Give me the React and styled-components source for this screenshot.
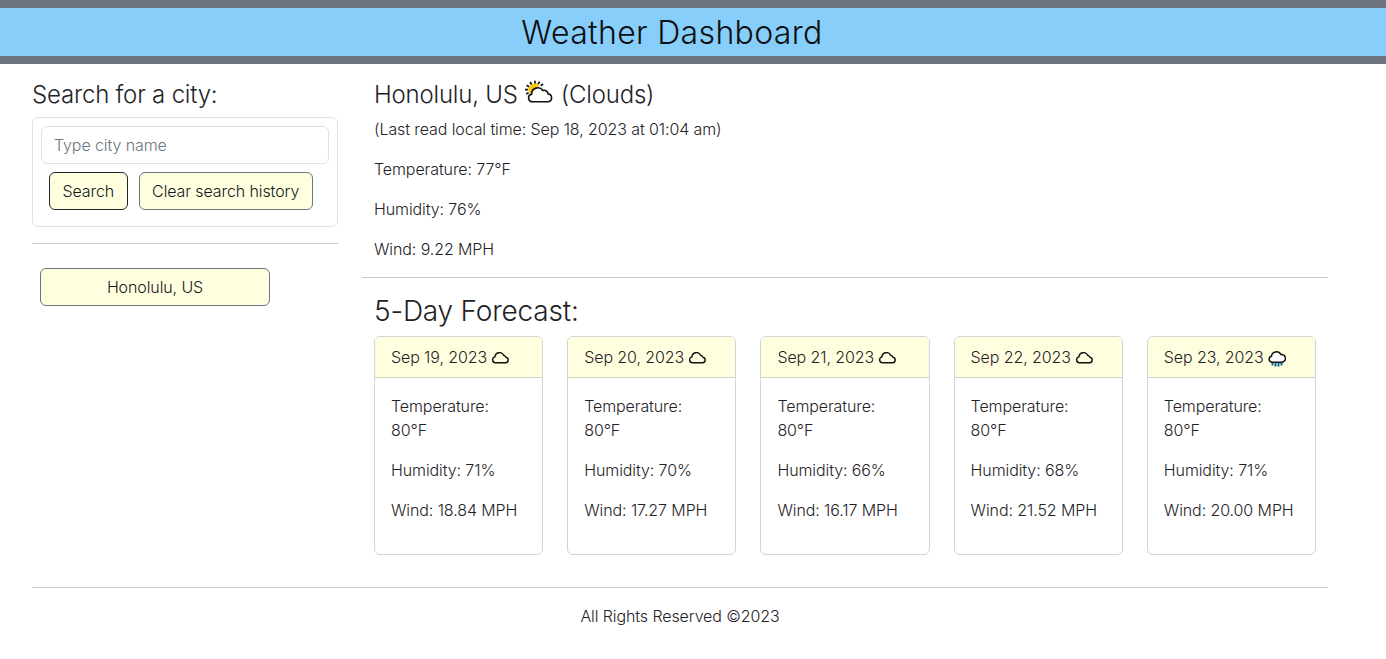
import React from 'react';
import styled, { createGlobalStyle } from 'styled-components';

const GlobalStyle = createGlobalStyle`
  html, body {
    margin: 0;
    padding: 0;
    background: #fff;
    color: #1f2327;
    font-family: 'Inter', 'Noto Sans', sans-serif;
    font-size: 16px;
    font-weight: 300;
    letter-spacing: -0.1px;
    line-height: 24px;
  }
  * { box-sizing: border-box; }
`;

const forecast = [
  { date: 'Sep 19, 2023', humidity: 71, wind: '18.84' },
  { date: 'Sep 20, 2023', humidity: 70, wind: '17.27' },
  { date: 'Sep 21, 2023', humidity: 66, wind: '16.17' },
  { date: 'Sep 22, 2023', humidity: 68, wind: '21.52' },
  { date: 'Sep 23, 2023', humidity: 71, wind: '20.00', rain: true },
];

const CloudIcon = () => (
  <IconSvg width="18" height="12" viewBox="0 0 18 12">
    <path d="M4.500 10.800a3 3 0 0 1-.6-5.900 4.600 4.600 0 0 1 8.700-1.700 3.400 3.400 0 0 1 2.400 2.100 2.800 2.800 0 0 1-.2 5.500z" fill="none" stroke="#111" strokeWidth="1.4" />
  </IconSvg>
);

const RainIcon = () => (
  <IconSvg $drop width="18" height="17" viewBox="0 0 18 17">
    <path d="M4.500 11.500v3M7.500 11.500v4M10.500 11.500v4M13.500 11.500v3" stroke="#0b6a94" strokeWidth="2" />
    <path d="M4 11.200a3 3 0 0 1-.6-5.900 5 5 0 0 1 9.400-1.800 3.800 3.800 0 0 1 1.500 7.700z" fill="#fff" stroke="#111" strokeWidth="1.5" />
  </IconSvg>
);

const SunCloudIcon = () => (
  <IconSvg $large width="30" height="24" viewBox="0 0 30 24">
    <path d="M4.200 10.500a6.800 6.800 0 0 1 6.800-7.200 6 6 0 0 1 5 2.400l-4 1.800-3.500 6-3-.5z" fill="#f9c80e" />
    <path d="M11 .8v2.800M6.200 2l1.300 2.500M2.600 5.200l2.500 1.500M1 9.600h2.900M2.200 14l2.400-1.200M15.600 1.700l-1.400 2.500M19 4l-2.200 1.900" stroke="#111" strokeWidth="1.700" />
    <path d="M8.500 21.800a3.900 3.900 0 0 1-.9-7.700 6.200 6.200 0 0 1 11.300-3.600 4 4 0 0 1 5.200 3.400 4 4 0 0 1 .2 7.900z" fill="#fff" stroke="#111" strokeWidth="1.600" />
  </IconSvg>
);

export default function App() {
  return (
    <>
      <GlobalStyle />
      <Header><HeaderTitle>Weather Dashboard</HeaderTitle></Header>
      <Page>
        <Columns>
          <Sidebar>
            <SearchTitle>Search for a city:</SearchTitle>
            <SearchCard>
              <CityInput placeholder="Type city name" />
              <ButtonRow>
                <ActionButton $dark>Search</ActionButton>
                <ActionButton>Clear search history</ActionButton>
              </ButtonRow>
            </SearchCard>
            <SideRule />
            <HistoryButton>Honolulu, US</HistoryButton>
          </Sidebar>
          <Main>
            <Current>
              <CityTitle>Honolulu, US <SunCloudIcon /> (Clouds)</CityTitle>
              <ReadTime>(Last read local time: Sep 18, 2023 at 01:04 am)</ReadTime>
              <Stat>Temperature: 77°F</Stat>
              <Stat>Humidity: 76%</Stat>
              <Stat>Wind: 9.22 MPH</Stat>
            </Current>
            <MainRule />
            <ForecastTitle>5-Day Forecast:</ForecastTitle>
            <CardRow>
              {forecast.map((day) => (
                <DayCard key={day.date}>
                  <DayHeader>{day.date} {day.rain ? <RainIcon /> : <CloudIcon />}</DayHeader>
                  <DayBody>
                    <DayStat>Temperature: 80°F</DayStat>
                    <DayStat>Humidity: {day.humidity}%</DayStat>
                    <DayStat>Wind: {day.wind} MPH</DayStat>
                  </DayBody>
                </DayCard>
              ))}
            </CardRow>
          </Main>
        </Columns>
        <Footer>All Rights Reserved ©2023</Footer>
      </Page>
    </>
  );
}

const IconSvg = styled.svg`
  display: inline-block;
  vertical-align: ${(p) => (p.$large ? '-1px' : p.$drop ? '-5px' : '-1px')};
`;

const Header = styled.header`
  height: 64px;
  background: #87cefa;
  border-top: 8px solid #6c757d;
  border-bottom: 8px solid #6c757d;
  padding: 2px 42px 0 0;
  text-align: center;
`;

const HeaderTitle = styled.h1`
  margin: 0;
  color: #0d0f11;
  font-size: 32px;
  font-weight: 300;
  letter-spacing: 0.35px;
  line-height: 46px;
`;

const Page = styled.div`
  padding: 0 58px 0 32px;
`;

const Columns = styled.div`
  display: grid;
  grid-template-columns: 306px 966px;
  gap: 24px;
`;

const Sidebar = styled.aside`
  padding-top: 16px;
`;

const SearchTitle = styled.h2`
  margin: 0 0 8px;
  font-size: 24px;
  font-weight: 300;
  letter-spacing: -0.2px;
  line-height: 29px;
`;

const SearchCard = styled.div`
  height: 110px;
  padding: 8px;
  border: 1px solid #dee2e6;
  border-radius: 6px;
`;

const CityInput = styled.input`
  display: block;
  width: 100%;
  height: 38px;
  padding: 6px 12px;
  border: 1px solid #dee2e6;
  border-radius: 6px;
  font: inherit;
  letter-spacing: inherit;
  color: #212529;
  &::placeholder { color: #6c757d; }
`;

const ButtonRow = styled.div`
  display: flex;
  gap: 11px;
  margin: 8px 0 0 8px;
`;

const ActionButton = styled.button`
  height: 38px;
  padding: 0 12.5px;
  background: lightyellow;
  border: 1px solid ${(p) => (p.$dark ? '#212529' : '#6c757d')};
  border-radius: 6px;
  color: #14171a;
  font: inherit;
  letter-spacing: inherit;
`;

const SideRule = styled.hr`
  margin: 16px 0 24px;
  border: 0;
  border-top: 1px solid #c9c9c9;
`;

const HistoryButton = styled(ActionButton)`
  display: block;
  width: 230px;
  margin-left: 8px;
`;

const Main = styled.main``;

const Current = styled.section`
  padding: 16px 0 0 12px;
`;

const CityTitle = styled.h2`
  margin: 0 0 8px;
  height: 29px;
  font-size: 24px;
  font-weight: 300;
  letter-spacing: -0.2px;
  line-height: 29px;
`;

const ReadTime = styled.p`
  margin: 0 0 16px;
  line-height: 24px;
`;

const Stat = styled.p`
  margin: 0 0 16px;
`;

const MainRule = styled.hr`
  margin: 0;
  border: 0;
  border-top: 1px solid #c9c9c9;
`;

const ForecastTitle = styled.h2`
  margin: 16px 0 8px 12px;
  font-size: 28px;
  font-weight: 300;
  letter-spacing: -0.2px;
  line-height: 34px;
`;

const CardRow = styled.div`
  display: flex;
  gap: 24px;
  padding: 0 12px;
`;

const DayCard = styled.article`
  flex: 1;
  height: 219px;
  border: 1px solid #ced4da;
  border-radius: 6px;
  overflow: hidden;
`;

const DayHeader = styled.div`
  height: 41px;
  padding: 8px 16px;
  background: lightyellow;
  border-bottom: 1px solid #d3d3c4;
  white-space: nowrap;
`;

const DayBody = styled.div`
  padding: 16px;
`;

const DayStat = styled.p`
  margin: 0 0 16px;
`;

const Footer = styled.footer`
  margin-top: 32px;
  padding-top: 16px;
  border-top: 1px solid #c9c9c9;
  text-align: center;
`;
